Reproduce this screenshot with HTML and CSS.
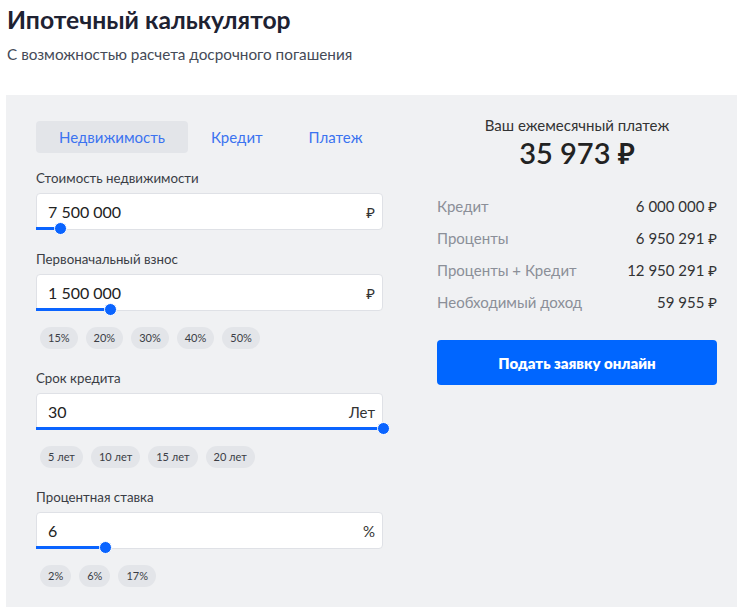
FILE: index.html
```html
<!DOCTYPE html>
<html lang="ru">
<head>
<meta charset="utf-8">
<title>Ипотечный калькулятор</title>
<link rel="stylesheet" href="styles.css">
</head>
<body>
<div class="page">
  <h1 class="title">Ипотечный калькулятор</h1>
  <p class="subtitle">С возможностью расчета досрочного погашения</p>
  <section class="panel">
    <div class="form">
      <div class="tabs">
        <span class="tab tab-active">Недвижимость</span>
        <span class="tab">Кредит</span>
        <span class="tab">Платеж</span>
      </div>

      <div class="field">
        <div class="label">Стоимость недвижимости</div>
        <div class="input">
          <span class="value">7 500 000</span>
          <span class="unit">₽</span>
          <div class="slider">
            <div class="fill" style="width:7%"></div>
            <div class="thumb" style="left:7%"></div>
          </div>
        </div>
      </div>

      <div class="field">
        <div class="label">Первоначальный взнос</div>
        <div class="input">
          <span class="value">1 500 000</span>
          <span class="unit">₽</span>
          <div class="slider">
            <div class="fill" style="width:21.5%"></div>
            <div class="thumb" style="left:21.5%"></div>
          </div>
        </div>
        <div class="chips">
          <span class="chip">15%</span>
          <span class="chip">20%</span>
          <span class="chip">30%</span>
          <span class="chip">40%</span>
          <span class="chip">50%</span>
        </div>
      </div>

      <div class="field">
        <div class="label">Срок кредита</div>
        <div class="input">
          <span class="value">30</span>
          <span class="unit">Лет</span>
          <div class="slider">
            <div class="fill" style="width:100%"></div>
            <div class="thumb" style="left:100%"></div>
          </div>
        </div>
        <div class="chips">
          <span class="chip">5 лет</span>
          <span class="chip">10 лет</span>
          <span class="chip">15 лет</span>
          <span class="chip">20 лет</span>
        </div>
      </div>

      <div class="field">
        <div class="label">Процентная ставка</div>
        <div class="input">
          <span class="value">6</span>
          <span class="unit">%</span>
          <div class="slider">
            <div class="fill" style="width:20%"></div>
            <div class="thumb" style="left:20%"></div>
          </div>
        </div>
        <div class="chips">
          <span class="chip">2%</span>
          <span class="chip">6%</span>
          <span class="chip">17%</span>
        </div>
      </div>
    </div>

    <aside class="summary">
      <div class="summary-title">Ваш ежемесячный платеж</div>
      <div class="summary-amount">35 973 ₽</div>
      <div class="rows">
        <div class="row"><span class="row-label">Кредит</span><span class="row-value">6 000 000 ₽</span></div>
        <div class="row"><span class="row-label">Проценты</span><span class="row-value">6 950 291 ₽</span></div>
        <div class="row"><span class="row-label">Проценты + Кредит</span><span class="row-value">12 950 291 ₽</span></div>
        <div class="row"><span class="row-label">Необходимый доход</span><span class="row-value">59 955 ₽</span></div>
      </div>
      <button class="apply">Подать заявку онлайн</button>
    </aside>
  </section>
</div>
</body>
</html>
```

FILE: styles.css
```css
* { box-sizing: border-box; }

html, body {
  margin: 0;
  padding: 0;
  background: #ffffff;
  font-family: Lato, "Noto Sans", "DejaVu Sans", sans-serif;
  color: #333333;
  overflow: hidden;
}

.page {
  padding: 5px 0 0 6px;
}

.title {
  margin: 0;
  font-size: 24.7px;
  line-height: 30px;
  font-weight: 700;
  color: #1e2232;
  padding-left: 1px;
}

.subtitle {
  margin: 9px 0 0;
  font-size: 15.3px;
  line-height: 20px;
  color: #454a57;
  padding-left: 1px;
}

.panel {
  margin-top: 31px;
  background: #f0f1f3;
  padding: 20px 20px 40px 30px;
  display: flex;
  gap: 54px;
}

.form {
  width: 347px;
  padding-top: 6px;
  display: flex;
  flex-direction: column;
}

.tabs {
  display: flex;
  height: 32px;
  margin-bottom: 16px;
}

.tab {
  display: flex;
  align-items: center;
  padding: 0 23px;
  font-size: 15px;
  color: #3b73f0;
  border-radius: 4px;
}

.tab-active {
  background: #e3e5e9;
}

.field + .field {
  margin-top: 20px;
}

.label {
  font-size: 13.3px;
  line-height: 18px;
  color: #3a3d45;
  margin-bottom: 6px;
}

.input {
  position: relative;
  height: 37px;
  background: #ffffff;
  border: 1px solid #dfe1e6;
  border-radius: 4px;
  display: flex;
  align-items: center;
  justify-content: space-between;
  padding: 0 7px 0 11px;
  font-size: 16px;
}

.value {
  color: #222222;
}

.unit {
  color: #333333;
  font-size: 15px;
}

.slider {
  position: absolute;
  left: -1px;
  right: -1px;
  bottom: -1px;
  height: 3px;
}

.fill {
  height: 3px;
  background: #0a64ff;
}

.thumb {
  position: absolute;
  top: -5px;
  width: 13px;
  height: 13px;
  margin-left: -6.5px;
  border-radius: 50%;
  background: #0a64ff;
  border: 1px solid #ffffff;
}

.chips {
  display: flex;
  gap: 8px;
  margin-top: 16px;
  padding-left: 4px;
}

.chip {
  height: 22px;
  padding: 0 8px;
  border-radius: 11px;
  background: #e3e5e9;
  font-size: 11px;
  line-height: 22px;
  color: #3a3d45;
}

.summary {
  width: 280px;
  display: flex;
  flex-direction: column;
}

.summary-title {
  text-align: center;
  font-size: 15px;
  line-height: 20px;
  color: #333333;
}

.summary-amount {
  text-align: center;
  font-size: 29px;
  line-height: 36px;
  font-weight: 600;
  color: #222222;
}

.rows {
  margin-top: 19px;
}

.row {
  display: flex;
  justify-content: space-between;
  align-items: center;
  height: 32px;
  font-size: 15px;
}

.row-label {
  color: #8b8f98;
}

.row-value {
  color: #333333;
}

.apply {
  margin-top: 22px;
  height: 45px;
  border: none;
  border-radius: 4px;
  background: #0066ff;
  color: #ffffff;
  font-family: Lato, "Noto Sans", sans-serif;
  font-size: 15px;
  font-weight: 800;
}
```
